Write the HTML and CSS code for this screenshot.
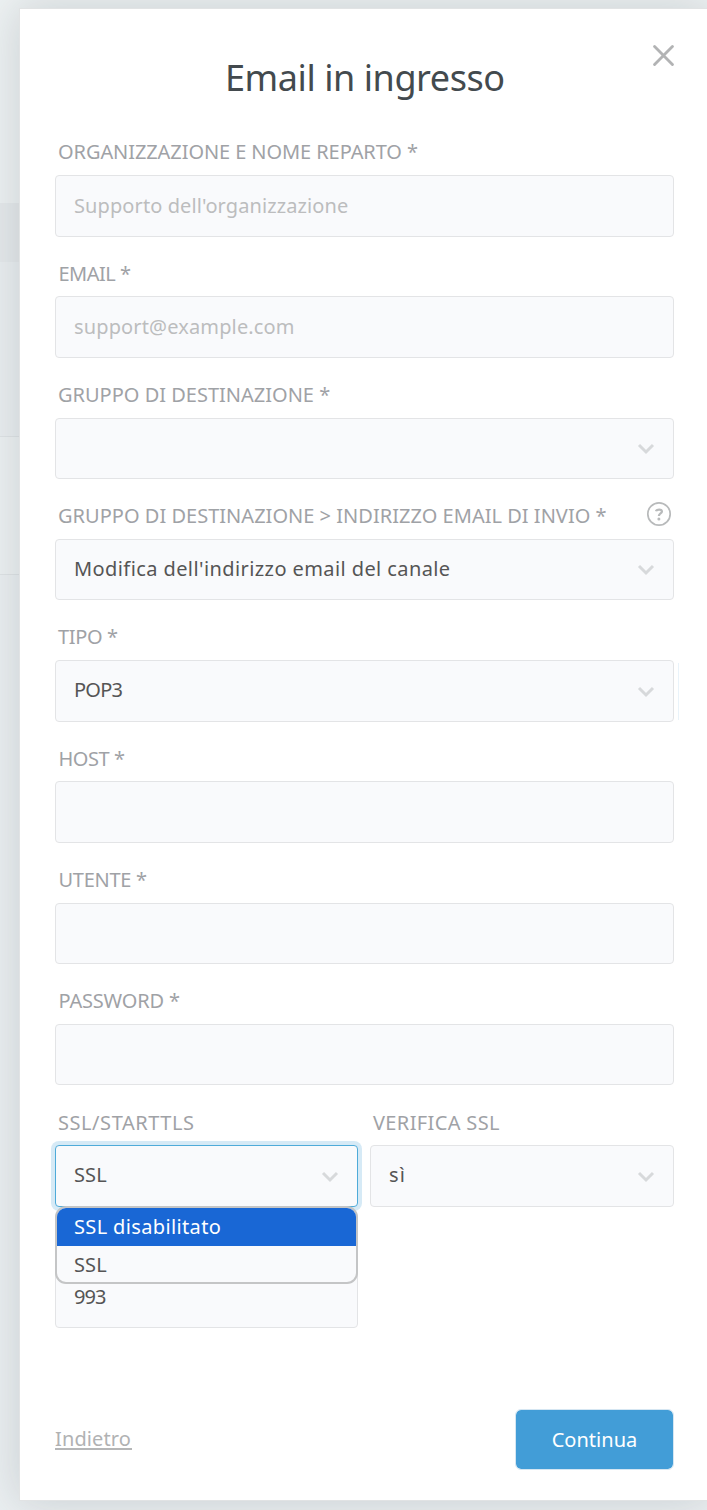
FILE: index.html
```html
<!DOCTYPE html>
<html lang="it">
<head>
<meta charset="utf-8">
<title>Email in ingresso</title>
<link rel="stylesheet" href="styles.css">
</head>
<body>
<svg width="0" height="0" class="defs"><defs>
  <symbol id="chev" viewBox="0 0 18 12"><path d="M2 2l7 7 7-7" fill="none" stroke="#d7d9db" stroke-width="3"/></symbol>
</defs></svg>
<div class="page">
  <div class="backdrop"><div class="bg-a"></div><div class="bg-b"></div><div class="bg-c"></div><div class="bg-d"></div><div class="bg-e"></div></div>
  <main class="modal">
    <svg class="close" viewBox="0 0 20 20"><path d="M1.5 1.5l17 17M18.5 1.5l-17 17" fill="none" stroke="#b2b3b4" stroke-width="2.7" stroke-linecap="round"/></svg>
    <h1 class="title">Email in ingresso</h1>
    <form class="form">
      <div class="group"><label class="label w-org">ORGANIZZAZIONE E NOME REPARTO *</label><div class="field hint"><span class="t-org">Supporto dell'organizzazione</span></div></div>
      <div class="group"><label class="label in w-email">EMAIL *</label><div class="field hint"><span class="t-mail">support@example.com</span></div></div>
      <div class="group"><label class="label">GRUPPO DI DESTINAZIONE *</label><div class="field"><svg class="chev"><use href="#chev"/></svg></div></div>
      <div class="group"><label class="label w-dest">GRUPPO DI DESTINAZIONE &gt; INDIRIZZO EMAIL DI INVIO *</label><svg class="help" viewBox="0 0 26 26"><circle cx="13" cy="13" r="11.2" fill="none" stroke="#b8babb" stroke-width="1.7"/><path d="M10 10.2C10.5 8.4 15.9 7.6 15.9 10.5C15.9 12.4 12.9 12.4 12.9 14.9" fill="none" stroke="#b8babb" stroke-width="2.3"/><circle cx="12.9" cy="18" r="1.5" fill="#b8babb"/></svg><div class="field"><span class="t-mod">Modifica dell'indirizzo email del canale</span><svg class="chev"><use href="#chev"/></svg></div></div>
      <div class="group"><label class="label w-tipo">TIPO *</label><div class="field edge"><span class="t-pop">POP3</span><svg class="chev"><use href="#chev"/></svg></div></div>
      <div class="group"><label class="label in w-host">HOST *</label><div class="field"></div></div>
      <div class="group"><label class="label in w-user">UTENTE *</label><div class="field"></div></div>
      <div class="group"><label class="label in w-pass">PASSWORD *</label><div class="field"></div></div>
      <div class="row">
        <div class="group"><label class="label w-ssl">SSL/STARTTLS</label><div class="field focus"><span class="t-ssl">SSL</span><svg class="chev"><use href="#chev"/></svg></div>
          <div class="menu"><div class="option active"><span class="t-dis">SSL disabilitato</span></div><div class="option"><span class="t-ssl">SSL</span></div></div>
        </div>
        <div class="group"><label class="label w-ver">VERIFICA SSL</label><div class="field"><span class="t-si">sì</span><svg class="chev"><use href="#chev"/></svg></div></div>
      </div>
      <div class="row"><div class="group port"><div class="field typed"><span class="t-993">993</span></div></div></div>
    </form>
    <footer class="footer"><a class="back">Indietro</a><button class="next">Continua</button></footer>
  </main>
</div>
</body>
</html>
```
FILE: styles.css
```css
* { box-sizing: border-box; }
body { margin: 0; font: 20px/28px "Noto Sans", sans-serif; color: #555; background: #eef1f2; }
.defs { position: absolute; }
.page { position: relative; width: 707px; height: 1510px; overflow: hidden; padding: 8px 0 0 19px; }

.backdrop { position: absolute; inset: 0; display: flex; flex-direction: column; background: #edf1f2; }
.bg-a { height: 203px; }
.bg-b { height: 59px; background: #e5e9eb; }
.bg-c { height: 175px; background: #eaeef0; border-bottom: 1px solid #dfe3e5; }
.bg-d { height: 138px; border-bottom: 1px solid #dfe3e5; }
.bg-e { flex: 1; background: #ebeff1; }

.modal { position: relative; width: 691px; height: 1493px; background: #fff; border: 1px solid #e1e3e4; padding: 45px 35px 0; box-shadow: 0 0 42px rgba(50, 65, 75, .19); }
.close { position: absolute; left: 633px; top: 36px; width: 21px; height: 21px; }
.title { margin: 0; height: 48px; font-size: 36px; line-height: 48px; font-weight: 400; letter-spacing: -.44px; color: #434a4e; padding-left: 170px; white-space: nowrap; }

.form { display: flex; flex-direction: column; margin-top: 36.4px; width: 619px; }
.group { position: relative; height: 121.28px; }
.label { display: block; height: 28px; margin-bottom: 8.75px; padding-left: 3px; color: #9fa2a6; white-space: nowrap; }
.label.in { padding-left: 3.5px; }
.field { position: relative; display: flex; align-items: center; justify-content: space-between; height: 61.45px; padding: 0 18px 2px; border: 1px solid #e3e4e6; border-radius: 4px; background: #f9fafc; white-space: nowrap; }
.hint { color: #bcbdbe; }
.hint, .typed { padding-bottom: 0; }
.focus { border-color: #4fabd9; box-shadow: 0 0 0 4px #d6eaf6; }
.edge::after { content: ""; position: absolute; right: -6px; top: 2px; width: 1px; height: 57px; background: #e9f3fa; }
.chev { width: 18px; height: 12px; margin-left: auto; position: relative; top: 1.8px; }
.help { position: absolute; left: 591px; top: -1px; width: 26px; height: 26px; }

.row { display: grid; grid-template-columns: 303px 304px; column-gap: 12px; }
.port { padding-top: 36.75px; }
.menu { position: absolute; z-index: 2; left: 0; top: 97px; width: 303px; height: 78px; border: 2px solid #c4c5c6; border-radius: 11px; background: #f9fafc; overflow: hidden; }
.option { height: 38px; line-height: 38px; padding: 0 17px; white-space: nowrap; }
.active { background: #1967d5; color: #fff; }

.footer { display: flex; align-items: center; justify-content: space-between; width: 619px; margin-top: 57.7px; }
.back { position: relative; color: #b1b2b3; letter-spacing: .12px; }
.back::after { content: ""; position: absolute; left: 0; bottom: 3px; width: 77px; height: 2px; background: #b5b6b7; }
.next { width: 159px; height: 61px; padding: 2px 0 0; border: 1px solid #d5e6f2; border-radius: 6px; background: #429dd7; background-clip: padding-box; color: #fff; font: 20px/28px "Noto Sans", sans-serif; letter-spacing: .04px; }

/* tracking */
.w-org { letter-spacing: -.08px; }
.w-dest { letter-spacing: .02px; }
.w-email { letter-spacing: -.5px; }
.w-tipo { letter-spacing: -.36px; }
.w-host { letter-spacing: -.45px; }
.w-user { letter-spacing: -.29px; }
.w-pass { letter-spacing: -.18px; }
.w-ssl { letter-spacing: .56px; }
.w-ver { letter-spacing: .36px; }
.t-org { letter-spacing: .1px; }
.t-mail { letter-spacing: .14px; }
.t-mod { letter-spacing: .41px; }
.t-pop { letter-spacing: -.77px; }
.t-ssl { letter-spacing: .1px; }
.t-dis { letter-spacing: .36px; }
.t-si { letter-spacing: 1.2px; }
.t-993 { letter-spacing: -.94px; }
```
